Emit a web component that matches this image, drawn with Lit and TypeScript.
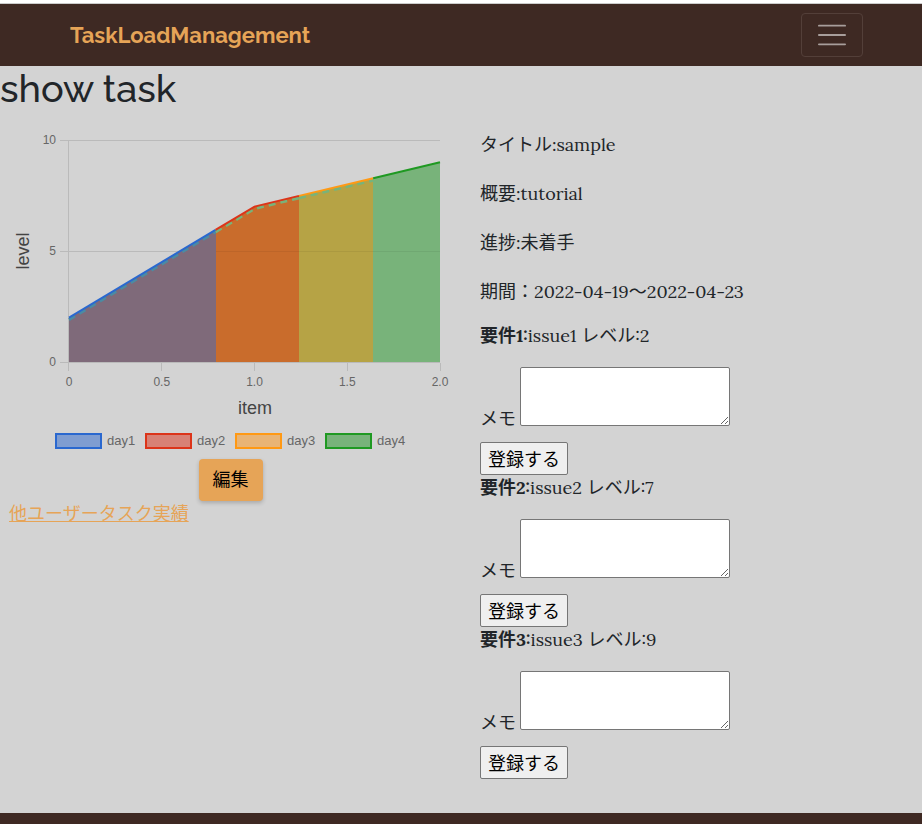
import { LitElement, html, css, svg } from "lit";
import { customElement } from "lit/decorators.js";

interface Day {
  name: string;
  line: string;
  area: string;
  swatch: string;
  dash: string;
  points: [number, number][];
}

const DAYS: Day[] = [
  { name: "day1", line: "#2a68cf", area: "#7f6a7a", swatch: "#7f9dd1", dash: "#4b8ba3", points: [[0, 2], [0.79, 5.95]] },
  { name: "day2", line: "#dc3419", area: "#c96c2c", swatch: "#d88175", dash: "#78b37a", points: [[0.79, 5.95], [1, 7], [1.24, 7.48]] },
  { name: "day3", line: "#ff9914", area: "#b6a345", swatch: "#e9b475", dash: "#78b37a", points: [[1.24, 7.48], [1.64, 8.28]] },
  { name: "day4", line: "#1f9922", area: "#78b37a", swatch: "#78b37a", dash: "#78b37a", points: [[1.64, 8.28], [2, 9]] },
];

const LEFT = 69;
const TOP = 15;
const WIDTH = 371;
const HEIGHT = 222;
const px = (v: number) => LEFT + (v / 2) * WIDTH;
const py = (v: number) => TOP + HEIGHT - (v / 10) * HEIGHT;
const path = (pts: [number, number][], dy = 0) =>
  "M" + pts.map(([x, y]) => `${px(x).toFixed(1)} ${(py(y) + dy).toFixed(1)}`).join("L");

@customElement("level-chart")
class LevelChart extends LitElement {
  static styles = css`
    :host { display: block; }
    .chart { display: block; width: 100%; height: auto; font-family: "Liberation Sans", Arial, sans-serif; }
    .tick { font-size: 12px; fill: #666; }
    .key { font-size: 13px; fill: #666; }
    .title { font-size: 18px; fill: #444; }
    .grid { stroke: #bababa; }
    .shade { stroke: #000; stroke-opacity: 0.06; }
    .area { shape-rendering: crispEdges; }
    .line { fill: none; stroke-width: 2; }
    .dash { fill: none; stroke-width: 3; stroke-dasharray: 7 5; }
    .swatch { stroke-width: 2; }
  `;

  render() {
    return html`<svg class="chart" viewBox="0 0 461 334" role="img" aria-label="level by item">
      ${[0, 5, 10].map((v) => svg`
        <line class="grid" x1="60" x2="440" y1=${py(v) + 0.5} y2=${py(v) + 0.5}></line>
        <text class="tick" text-anchor="end" x="56" y=${py(v) + 4}>${v}</text>`)}
      <line class="grid" x1="68.5" x2="68.5" y1="15" y2="246"></line>
      ${["0", "0.5", "1.0", "1.5", "2.0"].map((t) => svg`
        ${t === "0" ? "" : svg`<line class="grid" x1=${Math.floor(px(+t)) + 0.5} x2=${Math.floor(px(+t)) + 0.5} y1="238" y2="246"></line>`}
        <text class="tick" text-anchor="middle" x=${px(+t)} y="261">${t}</text>`)}
      ${DAYS.map((d) => {
        const first = d.points[0][0];
        const last = d.points[d.points.length - 1][0];
        return svg`
          <path class="area" fill=${d.area} d="${path(d.points)}L${px(last).toFixed(1)} ${py(0)}L${px(first).toFixed(1)} ${py(0)}Z"></path>
          ${d.name === "day4" ? "" : svg`<path class="dash" stroke=${d.dash} d=${path(d.points, 2)}></path>`}`;
      })}
      <line class="shade" x1="216" x2="440" y1="126.5" y2="126.5"></line>
      ${DAYS.map((d) => svg`<path class="line" stroke=${d.line} d=${path(d.points)}></path>`)}
      <text class="title" text-anchor="middle" x="255" y="289">item</text>
      <text class="title" text-anchor="middle" transform="translate(29 126) rotate(-90)">level</text>
      ${DAYS.map((d, i) => svg`
        <rect class="swatch" x=${56 + i * 90} y="309" width="45" height="14" fill=${d.swatch} stroke=${d.line}></rect>
        <text class="key" x=${107 + i * 90} y="320">${d.name}</text>`)}
    </svg>`;
  }
}

@customElement("app-root")
class AppRoot extends LitElement {
  static styles = css`
    :host {
      display: flex;
      flex-direction: column;
      min-height: 100vh;
      background: #d3d3d3;
      color: #212529;
      font-family: Lora, "Noto Sans CJK JP", serif;
      font-size: 18px;
    }
    * { box-sizing: border-box; }
    .strip { height: 4px; background: #fff; border-bottom: 1px solid #ccc; }
    .nav {
      display: flex;
      align-items: center;
      justify-content: space-between;
      height: 62px;
      padding: 0 59px 0 70px;
      background: #3e2923;
    }
    .brand { color: #e6a457; font: 700 22px/32px Raleway, Lato, sans-serif; text-decoration: none; }
    .toggler {
      width: 62px;
      height: 44px;
      padding: 0;
      border: 1px solid #533f39;
      border-radius: 4px;
      background: none;
    }
    .bars { display: block; margin: 0 auto; }
    .heading { margin: 0; font: 500 38px/46px Raleway, Lato, sans-serif; }
    .columns { display: grid; grid-template-columns: 1fr 1fr; flex: none; padding: 13px 0 34px; }
    .left { display: flex; flex-direction: column; }
    .edit {
      align-self: center;
      height: 42px;
      padding: 0 14px 4px;
      border: 0;
      border-radius: 4px;
      background: #e6a457;
      box-shadow: 0 2px 4px rgba(0, 0, 0, 0.2);
      color: #000;
      font: 18px "Noto Sans CJK JP", sans-serif;
    }
    .other { align-self: flex-start; margin-left: 9px; color: #e6a457; line-height: 25px; }
    .right { padding: 5px 16px 0 19px; }
    .info { display: grid; gap: 20px; margin: 0 0 17px; }
    .row { margin: 0; line-height: 29px; }
    .issue { margin: 0 0 19px; line-height: 25px; }
    .memo { display: flex; align-items: flex-end; gap: 4px; margin-bottom: 16px; }
    .label { line-height: 14px; }
    .note {
      width: 210px;
      height: 59px;
      margin: 0;
      border: 1px solid #767676;
      border-radius: 2px;
      background: #fff;
      font: 18px Lora, "Noto Sans CJK JP", serif;
    }
    .save {
      display: block;
      height: 33px;
      padding: 0 7px 2px;
      border: 1px solid #767676;
      border-radius: 2px;
      background: #efefef;
      color: #000;
      font: 18px "Noto Sans CJK JP", sans-serif;
    }
    .footer { flex: 1; min-height: 11px; background: #3e2923; }
  `;

  private info = ["タイトル:sample", "概要:tutorial", "進捗:未着手", "期間：2022-04-19～2022-04-23"];

  private issues = [2, 7, 9];

  render() {
    return html`
      <div class="strip"></div>
      <nav class="nav">
        <a class="brand" href="#">TaskLoadManagement</a>
        <button class="toggler" aria-label="Toggle navigation">
          <svg class="bars" width="28" height="28" viewBox="0 0 30 30">
            <path stroke="#fff" stroke-opacity="0.55" stroke-linecap="round" stroke-miterlimit="10" stroke-width="2" d="M1 5h28M1 15h28M1 25h28"></path>
          </svg>
        </button>
      </nav>
      <main>
        <h1 class="heading">show task</h1>
        <div class="columns">
          <section class="left">
            <level-chart></level-chart>
            <button class="edit">編集</button>
            <a class="other" href="#">他ユーザータスク実績</a>
          </section>
          <section class="right">
            <div class="info">
              ${this.info.map((text) => html`<p class="row">${text}</p>`)}
            </div>
            ${this.issues.map((level, i) => html`
              <form @submit=${(e: Event) => e.preventDefault()}>
                <p class="issue"><b>要件${i + 1}:</b>issue${i + 1} レベル:${level}</p>
                <div class="memo">
                  <label class="label" for="memo${i}">メモ</label>
                  <textarea class="note" id="memo${i}"></textarea>
                </div>
                <button class="save">登録する</button>
              </form>`)}
          </section>
        </div>
      </main>
      <footer class="footer"></footer>
    `;
  }
}
